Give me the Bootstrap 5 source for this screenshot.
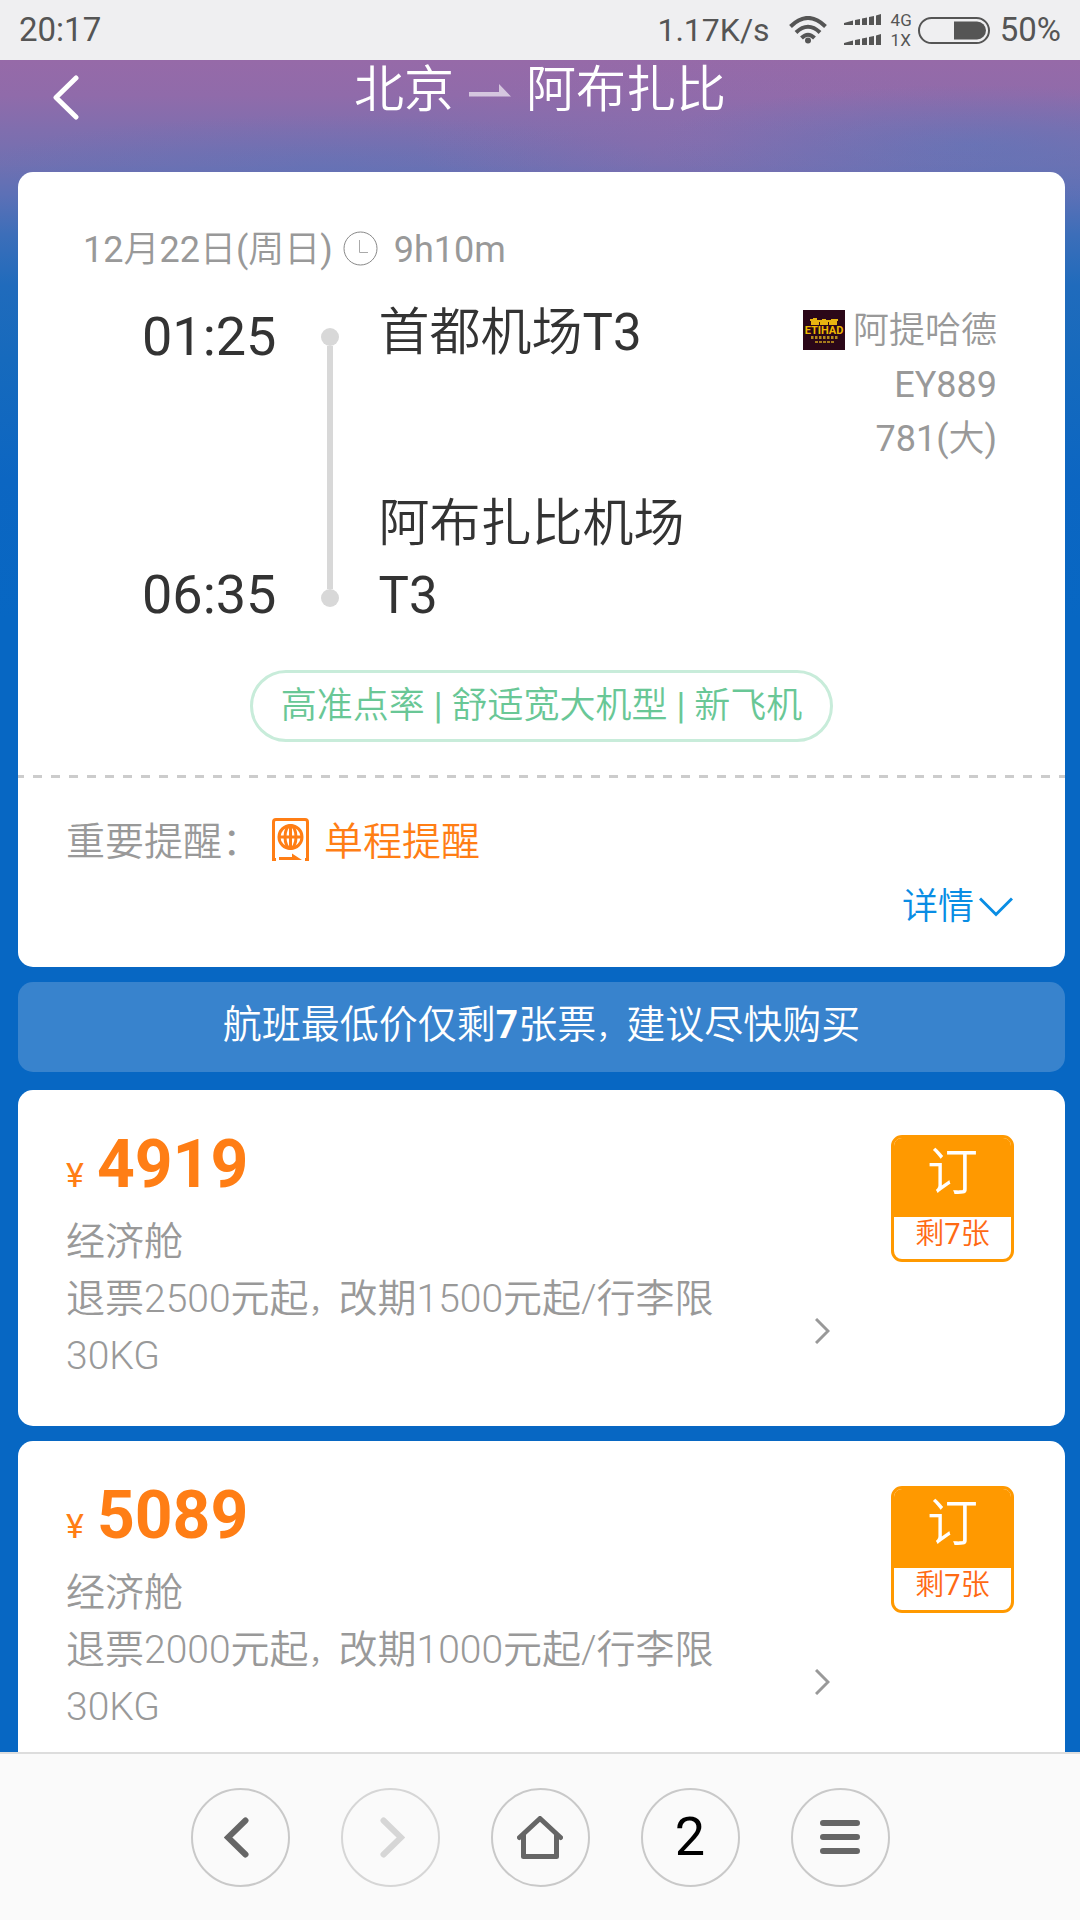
<!DOCTYPE html>
<html lang="zh-CN">
<head>
<meta charset="utf-8">
<meta name="viewport" content="width=device-width, initial-scale=1">
<title>北京 - 阿布扎比</title>
<link rel="stylesheet" href="https://cdn.jsdelivr.net/npm/bootstrap@5.3.0/dist/css/bootstrap.min.css">
<style>
  body { font-family: Roboto, "Noto Sans CJK SC DemiLight", "Noto Sans CJK SC", sans-serif; font-size: 36px; line-height: 54px; color: #333; background: #0767c3; }
  button { font-family: inherit; }
  svg { display: block; flex: none; }
  .status-strip { height: 60px; padding: 0 19px; background: #efeff1; color: #555; font-size: 33px; line-height: 60px; }
  .net-speed { font-size: 32px; margin-right: 19px; }
  .carrier { font-size: 17px; line-height: 20px; margin: 0 6px 0 9px; }
  .battery-text { font-size: 33px; margin-left: 10px; }

  .sky { background:
      radial-gradient(ellipse 320px 60px at 90% 85px, rgba(85,120,188,.45), transparent),
      radial-gradient(ellipse 300px 90px at 66% 80px, rgba(148,108,172,.45), transparent),
      radial-gradient(ellipse 340px 50px at 30% 105px, rgba(85,118,188,.3), transparent),
      linear-gradient(#966aa8 0, #906baa 35px, #806eae 70px, #7070b1 105px, #5c70b6 135px, #3c6eb9 175px, #206bbc 225px, #166abd 300px, #0c66c2 420px, #0767c3 560px); }
  .route-head { height: 112px; color: #fff; }
  .route-head .side { width: 132px; }
  .back-btn { padding: 15px 26px 0 53px; }
  .route-title { font-size: 50px; line-height: 60px; font-weight: 400; gap: 15px; }
  .page-pad { padding: 0 15px 0 18px; }

  .panel { background: #fff; border-radius: 15px; }
  .flight { padding-top: 51px; padding-bottom: 33px; margin-bottom: 15px; }
  .muted { color: #999; }
  .date-row { padding-left: 65px; gap: 10px; }
  .duration { margin-left: 6px; }
  .route-row { margin-top: 18px; padding: 0 68px 0 124px; }
  .times { padding: 6px 0 1px; font-size: 54px; line-height: 72px; }
  .timeline { margin: 33px 39px 25px 45px; width: 18px; height: 279px; }
  .timeline i { width: 18px; height: 18px; border-radius: 50%; background: #d8d8d8; }
  .timeline b { width: 6px; background: #d8d8d8; }
  .airports { padding-top: 2px; font-size: 51px; line-height: 72px; width: 340px; }
  .airline { padding-top: 9px; }
  .airline svg { margin: 0 8px 2px 0; }
  .feature-pill { margin-top: 38px; padding: 0 28px; border: 3px solid #c8ecda; border-radius: 36px; color: #69c796; line-height: 67px; height: 72px; }
  .perforation { height: 3px; margin-top: 33px; background: repeating-linear-gradient(90deg, #ccc 0 9px, #fff 9px 18px) -3px 0; }
  .notice { margin-top: 35px; padding-left: 48px; font-size: 39px; line-height: 58px; }
  .notice svg { margin: 0 15px 5px 11px; }
  .orange { color: #ff7e15; }
  .detail-row { margin-top: 9px; padding-right: 52px; }
  .detail-row a { color: #098de4; gap: 5px; }
  .comma { font-size: 30px; line-height: 1; }

  .tip-bar { background: #3883cd; border-radius: 15px; color: #fff; font-size: 39px; line-height: 86px; height: 90px; margin-bottom: 18px; }
  .offer { padding: 26px 51px 41px 48px; margin-bottom: 15px; }
  .price { line-height: 98px; font-size: 66px; font-weight: 700; }
  .price small { font-size: 34px; line-height: 1; font-weight: 400; margin-right: 13px; }
  .fare { font-size: 39px; line-height: 57px; font-weight: 300; color: #999; }
  .fare p { max-width: 664px; }
  .fare svg { margin-bottom: 41px; }
  .book { margin: 19px 0 0 61px; width: 123px; border: 3px solid #ff9900; border-radius: 11px; background: #fff; overflow: hidden; }
  .book .go { background: #ff9900; color: #fff; font-size: 51px; line-height: 69px; padding-bottom: 10px; }
  .book .left { color: #ff6a13; font-size: 29px; height: 42px; }
  .book .left span { display: block; line-height: 34px; }

  .browser-bar { height: 168px; background: #fafafa; border-top: 2px solid #ddd; gap: 51px; }
  .round-btn { width: 99px; height: 99px; border: 2px solid #c9c9c9; border-radius: 50%; background: transparent; color: #000; font-size: 54px; line-height: 1; }
  .round-btn:disabled { border-color: #d6d6d6; }
</style>
</head>
<body class="d-flex flex-column vh-100 overflow-hidden">

<div class="status-strip d-flex align-items-center justify-content-between flex-shrink-0">
  <span>20:17</span>
  <div class="d-flex align-items-center">
    <span class="net-speed">1.17K/s</span>
    <svg width="38" height="28" viewBox="0 0 38 28" fill="none" stroke="#555" stroke-width="4"><path d="M1.500 10.500 Q19-6.500 36.500 10.500M7 16.500Q19 5 31 16.500M12.500 22Q19 15.500 25.500 22" /><circle cx="19" cy="24.500" r="3" fill="#555" stroke="none"/></svg>
    <svg class="ms-3" width="39" height="32" viewBox="0 0 39 32" fill="#555"><g id="sig"><path d="M1 9L10 6.500V11H1zM12 6L17 5V11H12zM19 4.500L24 3.500V11H19zM26 3L31 2V11H26zM33 1.500L38 0V11H33z"/></g><use href="#sig" y="20"/></svg>
    <div class="carrier"><div>4G</div><div>1X</div></div>
    <svg width="72" height="27" viewBox="0 0 72 27"><rect x="1" y="1" width="70" height="25" rx="12.500" fill="none" stroke="#555" stroke-width="2"/><path d="M36 4.500H59a9 9 0 0 1 0 18H36z" fill="#555"/></svg>
    <span class="battery-text">50%</span>
  </div>
</div>

<main class="sky flex-grow-1 overflow-hidden">
  <header class="route-head d-flex align-items-start justify-content-between">
    <div class="side">
      <button class="back-btn btn border-0" type="button" aria-label="返回"><svg width="26" height="45" viewBox="0 0 26 45" fill="none" stroke="#fff" stroke-width="5" stroke-linecap="round" stroke-linejoin="round"><path d="M23 3L3 22.500L23 42"/></svg></button>
    </div>
    <h1 class="route-title d-flex align-items-center mb-0"><span>北京</span><svg width="42" height="13" viewBox="0 0 42 13" fill="#fff" fill-opacity=".62"><path d="M0 8H30V0L42 12.500H0z"/></svg><span>阿布扎比</span></h1>
    <div class="side"></div>
  </header>

  <div class="page-pad">
    <section class="panel flight">
      <div class="date-row d-flex align-items-center muted">
        <span>12月22日(周日)</span>
        <svg class="mb-1" width="35" height="35" viewBox="0 0 35 35" fill="none" stroke="#888"><circle cx="17.500" cy="17.500" r="16.500"/><path d="M16.500 9V21.500H25" stroke="#aaa"/></svg>
        <span class="duration">9h10m</span>
      </div>

      <div class="route-row d-flex">
        <div class="times d-flex flex-column justify-content-between"><span>01:25</span><span>06:35</span></div>
        <div class="timeline d-flex flex-column align-items-center"><i></i><b class="flex-grow-1"></b><i></i></div>
        <div class="airports d-flex flex-column justify-content-between">
          <div>首都机场T3</div>
          <div>阿布扎比机场T3</div>
        </div>
        <div class="airline muted ms-auto text-end">
          <div class="d-flex align-items-center justify-content-end">
            <svg width="42" height="40" viewBox="0 0 42 40"><rect width="42" height="40" fill="#2b0718"/><path d="M7 10h2v4h2v-5h2v5h2v-3h3v3h2v-4h2v4h2v-3h3v3h2v-4h2v4h2v-4h2" fill="none" stroke="#e8b411" stroke-width="2"/><text x="21" y="24" text-anchor="middle" font-size="11" font-weight="700" fill="#f0b800">ETIHAD</text><path d="M8 27.500h27" stroke="#b58a1c" stroke-width="3" stroke-dasharray="2.500 1.500"/><path d="M12 32h20" stroke="#a57a1c" stroke-width="2" stroke-dasharray="3 1"/></svg>
            <span>阿提哈德</span>
          </div>
          <div>EY889</div>
          <div>781(大)</div>
        </div>
      </div>

      <div class="text-center d-flex justify-content-center"><div class="feature-pill">高准点率 | 舒适宽大机型 | 新飞机</div></div>
      <div class="perforation"></div>

      <div class="notice d-flex align-items-center">
        <span class="muted">重要提醒：</span>
        <svg width="37" height="43" viewBox="0 0 37 43" fill="none" stroke="#ff7e15" stroke-width="3"><path d="M4 41.500H1.500V4Q1.500 1.500 4 1.500H33Q35.500 1.500 35.500 4V41.500H33"/><circle cx="18.500" cy="19" r="11.500"/><ellipse cx="18.500" cy="19" rx="5.500" ry="11.500"/><path d="M6.500 19H30.500M18.500 7V31"/><path d="M7 42V39H20V35.500L30 42z" fill="#ff7e15" stroke="none"/></svg>
        <span class="orange">单程提醒</span>
      </div>
      <div class="detail-row d-flex justify-content-end">
        <a href="#" class="d-flex align-items-center text-decoration-none"><span>详情</span><svg width="34" height="20" viewBox="0 0 34 20" fill="none" stroke="#098de4" stroke-width="3"><path d="M1 1.500L17 17.500L33 1.500"/></svg></a>
      </div>
    </section>

    <div class="tip-bar text-center">航班最低价仅剩<strong>7</strong>张票<span class="comma">，</span>建议尽快购买</div>

    <section class="panel offer d-flex align-items-start">
      <div class="flex-grow-1">
        <div class="price orange"><small>¥</small>4919</div>
        <div class="fare d-flex align-items-end justify-content-between">
          <p class="mb-0">经济舱<br>退票2500元起<span class="comma">，</span>改期1500元起/行李限30KG</p>
          <svg width="15" height="26" viewBox="0 0 15 26" fill="none" stroke="#999" stroke-width="3"><path d="M1 1L13 13L1 25"/></svg>
        </div>
      </div>
      <button class="book p-0 flex-shrink-0" type="button"><div class="go">订</div><div class="left"><span>剩7张</span></div></button>
    </section>

    <section class="panel offer d-flex align-items-start">
      <div class="flex-grow-1">
        <div class="price orange"><small>¥</small>5089</div>
        <div class="fare d-flex align-items-end justify-content-between">
          <p class="mb-0">经济舱<br>退票2000元起<span class="comma">，</span>改期1000元起/行李限30KG</p>
          <svg width="15" height="26" viewBox="0 0 15 26" fill="none" stroke="#999" stroke-width="3"><path d="M1 1L13 13L1 25"/></svg>
        </div>
      </div>
      <button class="book p-0 flex-shrink-0" type="button"><div class="go">订</div><div class="left"><span>剩7张</span></div></button>
    </section>
  </div>
</main>

<nav class="browser-bar d-flex align-items-center justify-content-center flex-shrink-0">
  <button class="round-btn d-flex align-items-center justify-content-center p-0" type="button" aria-label="后退"><svg class="me-2" width="25" height="41" viewBox="0 0 25 41" fill="none" stroke="#666" stroke-width="6" stroke-linecap="round"><path d="M21.500 3.500L4 20.500L21.500 37.500"/></svg></button>
  <button class="round-btn d-flex align-items-center justify-content-center p-0" type="button" aria-label="前进" disabled><svg class="ms-1" width="25" height="41" viewBox="0 0 25 41" fill="none" stroke="#d6d6d6" stroke-width="6" stroke-linecap="round"><path d="M3.500 3.500L21 20.500L3.500 37.500"/></svg></button>
  <button class="round-btn d-flex align-items-center justify-content-center p-0" type="button" aria-label="主页"><svg width="46" height="43" viewBox="0 0 46 43" fill="none" stroke="#666" stroke-width="5" stroke-linecap="round" stroke-linejoin="round"><path d="M2.500 21.500L23 2.500L43.500 21.500M6.500 19V40.500H39.500V19"/></svg></button>
  <button class="round-btn d-flex align-items-center justify-content-center p-0" type="button" aria-label="2 个标签页">2</button>
  <button class="round-btn d-flex align-items-center justify-content-center p-0" type="button" aria-label="菜单"><svg width="40" height="34" viewBox="0 0 40 34" stroke="#666" stroke-width="6" stroke-linecap="round"><path d="M3 3H37M3 17H37M3 31H37"/></svg></button>
</nav>

<script src="https://cdn.jsdelivr.net/npm/bootstrap@5.3.0/dist/js/bootstrap.bundle.min.js"></script>
</body>
</html>
